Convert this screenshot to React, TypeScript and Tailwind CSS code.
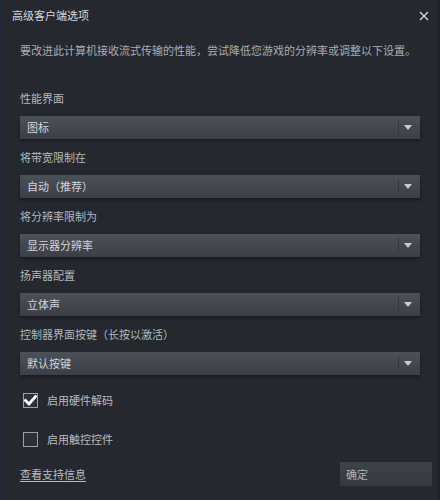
import { useState } from 'react'

const font = { fontFamily: '"Noto Sans CJK SC", "Noto Sans", sans-serif' }

function Dropdown({ label, value }: { label: string; value: string }) {
  return (
    <div className="flex flex-col">
      <div className="h-[17px] leading-[17px] text-[11px] text-[#b4b8bc] mb-[9px]">{label}</div>
      <div className="h-[23px] w-[400px] flex items-center bg-gradient-to-b from-[#4b5059] to-[#3b3f47] shadow-[0_2px_3px_rgba(0,0,0,0.35)]">
        <span className="flex-1 pl-[7px] text-[11px] text-[#d2d6da] leading-none">{value}</span>
        <span className="w-px h-[15px] bg-[#33373e] mr-[5px]" />
        <svg width="8" height="5" viewBox="0 0 8 5" className="mr-[8px]">
          <path d="M0 0 H8 L4 5 Z" fill="#c8ccd0" />
        </svg>
      </div>
    </div>
  )
}

function Check({ checked, label }: { checked: boolean; label: string }) {
  return (
    <div className="flex items-center h-[16px] pl-[21px]">
      <div className="w-[15px] h-[15px] border border-[#9aa0a6] bg-[#2c3037] flex items-center justify-center">
        {checked && (
          <svg width="13" height="11" viewBox="0 0 13 11">
            <path d="M1.5 5.5 L5 9 L11.5 1.5" stroke="#ffffff" strokeWidth="2.8" fill="none" strokeLinecap="square" />
          </svg>
        )}
      </div>
      <span className="ml-[9px] text-[11px] text-[#b8bcc0]">{label}</span>
    </div>
  )
}

export default function App() {
  const [open] = useState(true)
  if (!open) return null

  return (
    <main className="w-[440px] h-[500px] bg-[#25282f] flex overflow-hidden" style={font}>
      <div className="w-[2px] shrink-0 bg-[#1d2a3c]" />
      <div className="flex-1 min-w-0 flex flex-col">
        {/* ── Title ── */}
        <div className="h-[31px] flex items-center pl-[10px] pr-[8px]">
          <span className="text-[11px] text-[#d4d8dc] flex-1">高级客户端选项</span>
          <svg width="10" height="10" viewBox="0 0 10 10">
            <path d="M1 1 L9 9 M9 1 L1 9" stroke="#c6cacd" strokeWidth="1.6" />
          </svg>
        </div>

        {/* ── Description ── */}
        <p className="pl-[18px] mt-[10px] text-[11px] text-[#a9adb1] leading-[18px] whitespace-nowrap">
          要改进此计算机接收流式传输的性能，尝试降低您游戏的分辨率或调整以下设置。
        </p>

        <div className="pl-[18px] mt-[31px] flex flex-col gap-[10px]">
          <Dropdown label="性能界面" value="图标" />
          <Dropdown label="将带宽限制在" value="自动（推荐）" />
          <Dropdown label="将分辨率限制为" value="显示器分辨率" />
          <Dropdown label="扬声器配置" value="立体声" />
          <Dropdown label="控制器界面按键（长按以激活）" value="默认按键" />
        </div>

        <div className="mt-[17px] flex flex-col gap-[23px]">
          <Check checked label="启用硬件解码" />
          <Check checked={false} label="启用触控控件" />
        </div>

        <div className="mt-[15px] flex items-center pl-[18px] pr-[5px]">
          <a className="flex-1 text-[11px] text-[#b8bcc0] underline underline-offset-2">查看支持信息</a>
          <button className="w-[92px] h-[24px] bg-gradient-to-b from-[#3d424a] to-[#353940] text-left pl-[6px] text-[11px] text-[#aeb2b6]">
            确定
          </button>
        </div>
      </div>
      <div className="w-[3px] shrink-0 bg-[#1f2227]" />
    </main>
  )
}
